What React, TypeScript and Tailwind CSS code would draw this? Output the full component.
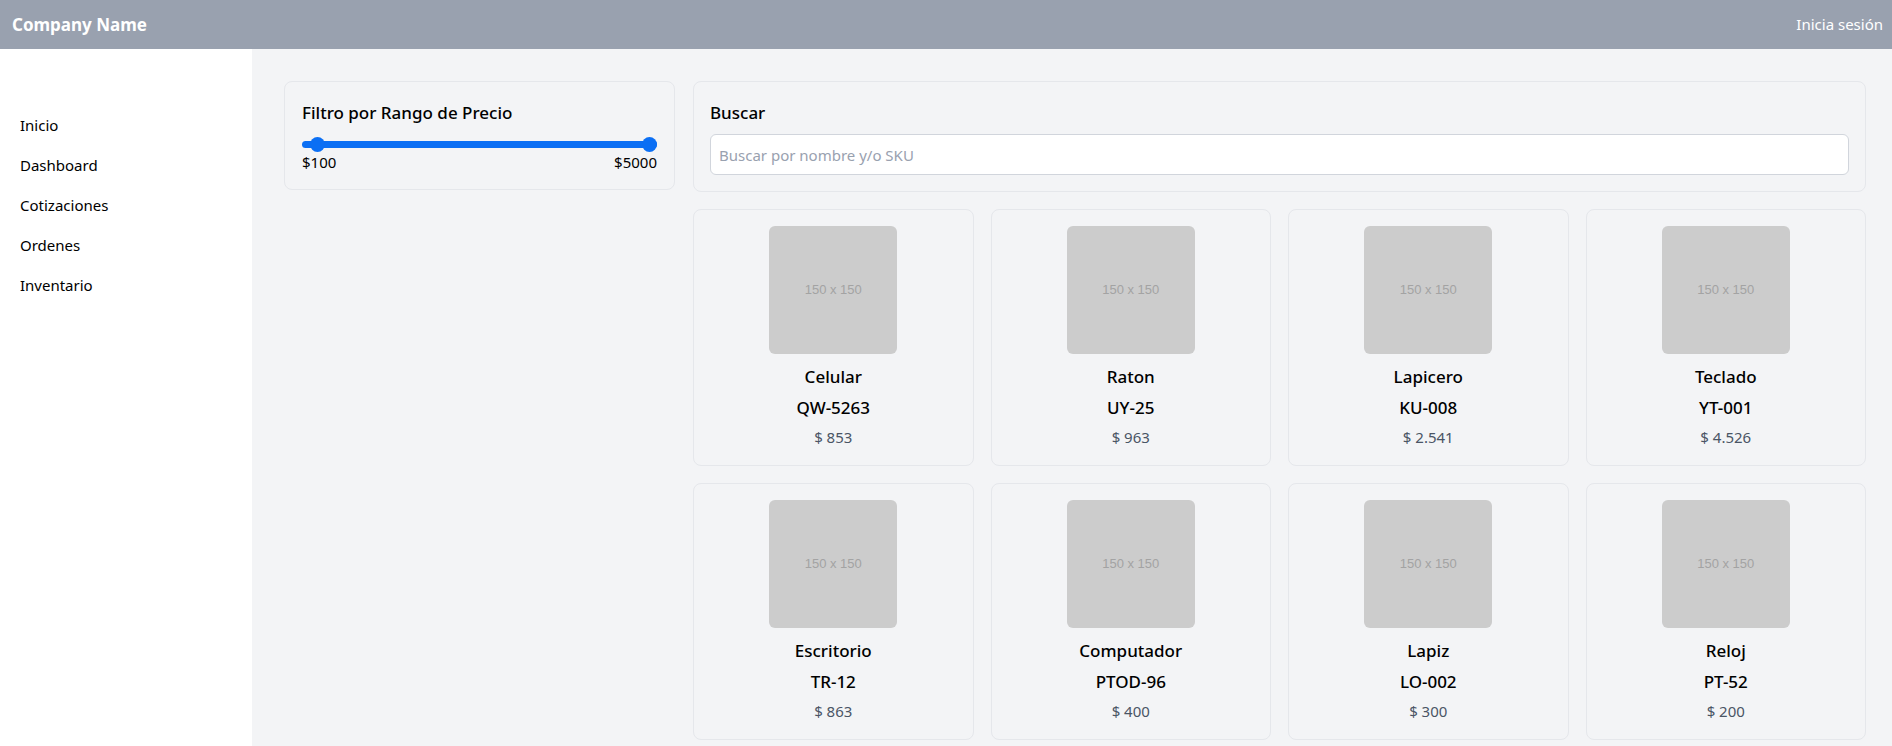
import { useState } from "react"

type Product = {
  name: string
  sku: string
  price: string
}

const products: Product[] = [
  { name: "Celular", sku: "QW-5263", price: "853" },
  { name: "Raton", sku: "UY-25", price: "963" },
  { name: "Lapicero", sku: "KU-008", price: "2.541" },
  { name: "Teclado", sku: "YT-001", price: "4.526" },
  { name: "Escritorio", sku: "TR-12", price: "863" },
  { name: "Computador", sku: "PTOD-96", price: "400" },
  { name: "Lapiz", sku: "LO-002", price: "300" },
  { name: "Reloj", sku: "PT-52", price: "200" },
]

const menu = ["Inicio", "Dashboard", "Cotizaciones", "Ordenes", "Inventario"]

const ProductCard = ({ product }: { product: Product }) => (
  <div className="flex flex-col items-center rounded-lg border border-gray-200 pt-4 pb-4">
    <div className="flex h-32 w-32 items-center justify-center rounded-md bg-[#cccccc] font-['Liberation_Sans',sans-serif] text-[13px] text-[#a3a3a3]">
      150 x 150
    </div>
    <p className="mt-[9px] text-[17px] leading-[27px] font-medium text-black">{product.name}</p>
    <p className="mt-1 text-[17px] leading-[27px] font-medium text-black">{product.sku}</p>
    <p className="mt-[4px] text-[15px] leading-6 text-gray-600">$ {product.price}</p>
  </div>
)

export default function App() {
  const [search, setSearch] = useState("")

  return (
    <div className="min-h-screen bg-gray-100 font-['Noto_Sans',sans-serif] text-black">
      {/* top bar */}
      <header className="flex h-[49px] items-center justify-between bg-gray-400 pr-[9px] pl-3">
        <span className="text-[17px] font-bold text-white">Company Name</span>
        <a href="#" className="text-[15px] text-white">Inicia sesión</a>
      </header>

      <div className="flex">
        <aside className="min-h-[697px] w-[252px] shrink-0 bg-white pt-[56px]">
          <nav className="flex flex-col">
            {menu.map((item) => (
              <a key={item} href="#" className="px-5 py-2 text-[15px] leading-6 text-black">
                {item}
              </a>
            ))}
          </nav>
        </aside>

        <main className="flex flex-1 gap-[18px] pt-8 pr-[26px] pl-8">
          <div className="w-[391px] shrink-0">
            <div className="rounded-lg border border-gray-200 px-[17px] pt-[17px] pb-[17px]">
              <h2 className="text-[17px] leading-7 font-medium">Filtro por Rango de Precio</h2>
              <div className="relative mt-[10px] h-[15px]">
                <div className="absolute top-[4px] right-0 left-0 h-[7px] rounded-full bg-[#0b6ff4]" />
                <div className="absolute top-0 left-[8px] h-[15px] w-[15px] rounded-full bg-[#0b6ff4]" />
                <div className="absolute top-0 right-0 h-[15px] w-[15px] rounded-full bg-[#0b6ff4]" />
              </div>
              <div className="flex justify-between text-[15px] leading-5">
                <span>$100</span>
                <span>$5000</span>
              </div>
            </div>
          </div>

          <div className="flex flex-1 flex-col gap-[17px]">
            <div className="rounded-lg border border-gray-200 px-4 pt-[17px] pb-4">
              <h2 className="text-[17px] leading-7 font-medium">Buscar</h2>
              <input
                value={search}
                onChange={(e) => setSearch(e.target.value)}
                placeholder="Buscar por nombre y/o SKU"
                className="mt-[7px] h-[41px] w-full rounded-md border border-gray-300 bg-white px-2 text-[15px] placeholder:text-gray-400 focus:outline-none"
              />
            </div>

            <div className="grid grid-cols-4 gap-[17px]">
              {products.map((p) => (
                <ProductCard key={p.sku} product={p} />
              ))}
            </div>
          </div>
        </main>
      </div>
    </div>
  )
}
